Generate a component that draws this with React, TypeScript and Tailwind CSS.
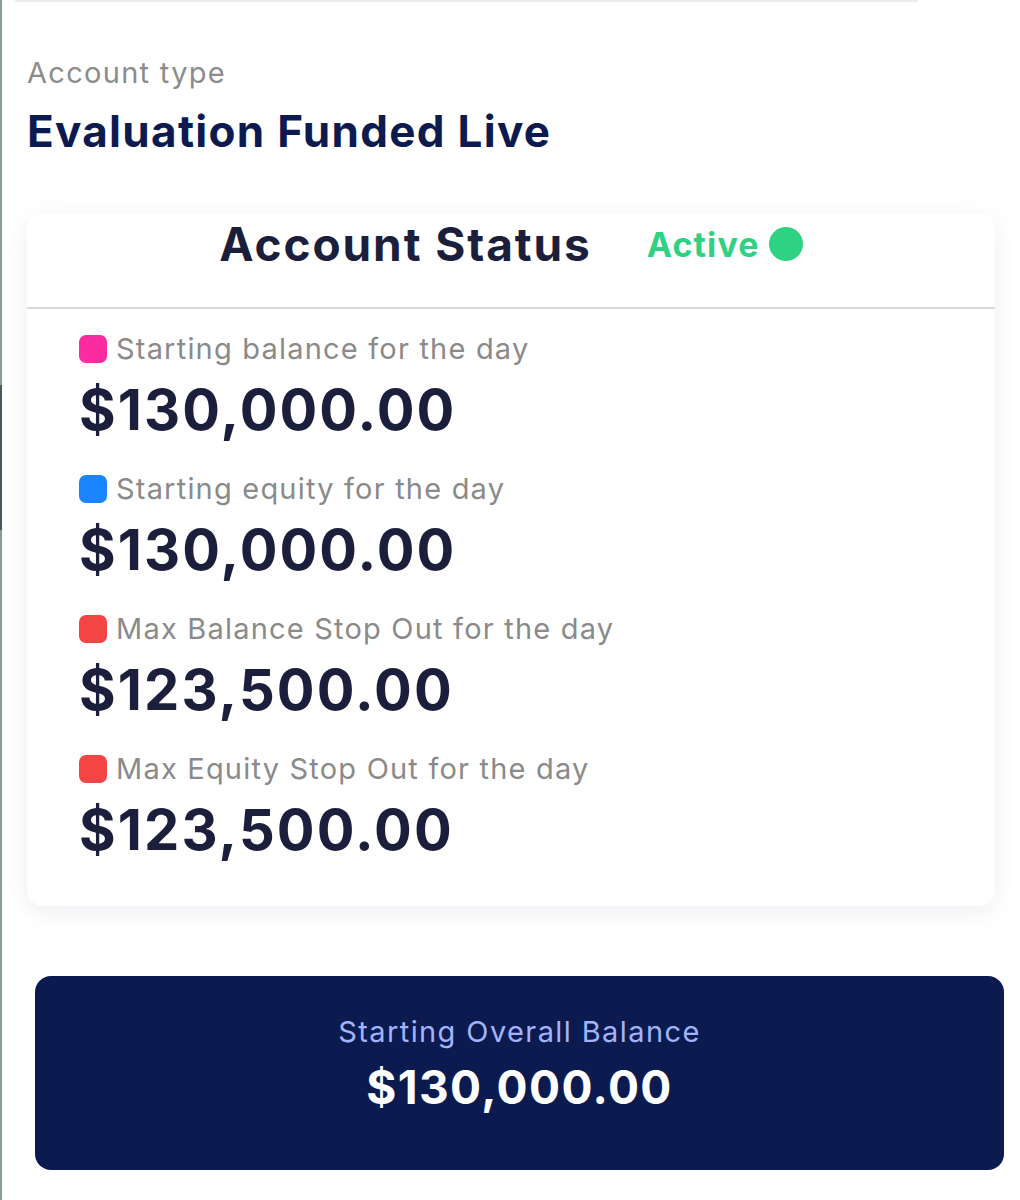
import React from "react";

const rows = [
  { label: "Starting balance for the day", value: "$130,000.00", color: "bg-[#fb2ba0]" },
  { label: "Starting equity for the day", value: "$130,000.00", color: "bg-[#1b84ff]" },
  { label: "Max Balance Stop Out for the day", value: "$123,500.00", color: "bg-[#f44545]" },
  { label: "Max Equity Stop Out for the day", value: "$123,500.00", color: "bg-[#f44545]" },
];

export default function App() {
  return (
    <div className="relative min-h-[1200px] w-[1020px] bg-white font-['Inter',sans-serif] overflow-hidden">
      {/* left edge */}
      <div className="absolute left-0 top-0 h-full w-[2px] bg-[#8a9a9a]" />
      <div className="absolute left-0 top-[385px] h-[145px] w-[2px] bg-[#4a5a5e]" />

      <div className="mx-[15px] h-[2px] w-[903px] bg-[#ececec]" />

      <div className="pl-[27px] pt-[53px]">
        <p className="text-[29px] leading-[36px] tracking-[1.3px] text-[#8c8c8c]">Account type</p>
        <h1 className="mt-[16px] text-[44px] leading-[48px] font-bold tracking-[1.3px] text-[#0c1a4f]">
          Evaluation Funded Live
        </h1>
      </div>

      <div className="mx-[27px] mt-[58px] w-[968px] rounded-[16px] bg-white shadow-[0_6px_24px_rgba(20,30,80,0.07)]">
        <div className="flex h-[96px] items-center justify-center gap-[55px] border-b-2 border-[#d9d9d9] pb-[32px]">
          <h2 className="text-[46px] font-bold tracking-[1.9px] text-[#1c1f3b]">Account Status</h2>
          <div className="flex items-center gap-[9px]">
            <span className="text-[34px] font-bold tracking-[1.1px] text-[#2fd182]">Active</span>
            <span className="h-[34px] w-[34px] rounded-full bg-[#2fd182]" />
          </div>
        </div>

        <div className="flex flex-col gap-[19px] px-[52px] pb-[34px] pt-[22px]">
          {rows.map((r) => (
            <div key={r.label}>
              <div className="flex items-center gap-[9px]">
                <span className={`h-[28px] w-[28px] rounded-[7px] ${r.color}`} />
                <span className="text-[29px] leading-[36px] tracking-[1.2px] text-[#8a8a8a]">{r.label}</span>
              </div>
              <div className="mt-[1px] text-[56px] leading-[84px] font-bold tracking-[2.1px] text-[#1c1f3b]">
                {r.value}
              </div>
            </div>
          ))}
        </div>
      </div>

      <div className="ml-[35px] mt-[70px] flex h-[194px] w-[969px] flex-col items-center justify-center rounded-[16px] bg-[#0b1b50] pb-[17px]">
        <p className="text-[29px] leading-[36px] tracking-[1.4px] text-[#a3b3fa]">Starting Overall Balance</p>
        <p className="mt-[9px] text-[46px] leading-[56px] font-bold tracking-[1.4px] text-white">$130,000.00</p>
      </div>
    </div>
  );
}
